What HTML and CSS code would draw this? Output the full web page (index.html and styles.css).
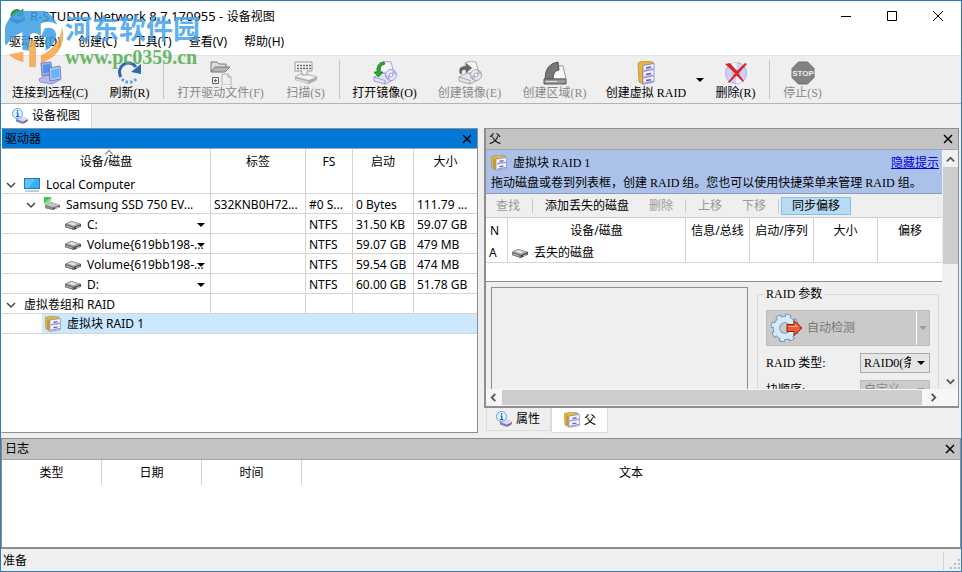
FILE: index.html
```html
<!DOCTYPE html>
<html lang="zh-CN">
<head>
<meta charset="utf-8">
<title>R-STUDIO Network 8.7.170955 - 设备视图</title>
<link rel="stylesheet" href="styles.css">
</head>
<body>
<svg class="defs" aria-hidden="true">
  <symbol id="i-disk" viewBox="0 0 16 16">
    <path d="M0 7 L6 4 L16 7 L16 9.500 L9 13 L0 10Z" fill="#444"/>
    <path d="M0 7 L6 4 L16 7 L9 10Z" fill="#a8a8a8"/>
    <path d="M3 6.600 L6.500 5 L12 6.800 L8.500 8.400Z" fill="#e2e2e2"/>
    <path d="M0 7 L9 10 V13 L0 10Z" fill="#777"/>
    <path d="M1 8.600 L7 10.600 V11.600 L1 9.600Z" fill="#b5b5b5"/>
    <path d="M11 10.500 L14.500 8.800 V9.800 L11 11.500Z" fill="#ccc"/>
  </symbol>
  <symbol id="i-ssd" viewBox="0 0 16 16">
    <path d="M1 8 L7 5 L16 8 L16 10 L9 13 L1 11Z" fill="#555"/>
    <path d="M1 8 L7 5 L16 8 L9 10.500Z" fill="#c4c4c4"/>
    <path d="M1 8 L9 10.500 V13 L1 11Z" fill="#888"/>
    <path d="M11 10.700 L14.500 9.300 V10.200 L11 11.700Z" fill="#ddd"/>
    <path d="M0 0 H8 L6 5 L1 8 L0 6Z" fill="#7fe093"/>
    <path d="M0 0 H7 L0 6Z" fill="#35c653"/>
  </symbol>
  <symbol id="i-pc" viewBox="0 0 16 16">
    <path d="M0 1 H16 V12 H0Z" fill="#2279b8"/>
    <path d="M1 2 H15 V11 H1Z" fill="#38b0f0"/>
    <path d="M1 2 H11 L5 11 H1Z" fill="#5cc4f8"/>
    <path d="M1 14 H15" stroke="#7fa2bd" stroke-width="1"/>
  </symbol>
  <symbol id="i-raid" viewBox="0 0 16 16">
    <path d="M0 1.500 L8 0 L14 1 L14 3 L5 4 V15 L1 13Z" fill="#e6b941" stroke="#9a7a2a" stroke-width=".5"/>
    <path d="M2 3 L4 3.500 V14 L2 13Z" fill="#c79a30"/>
    <path d="M5 4 L15.500 2.500 V13.500 L5 15.500Z" fill="#f4f4ff" stroke="#7a7ac0" stroke-width=".6"/>
    <path d="M6 8 L15 6.600 V8 L6 9.500Z M6 13.500 L15 11.800 V13 L6 15Z" fill="#9c9cdc"/>
    <path d="M8.500 6.300 L12.500 5.700 M8.500 11.700 L12.500 11" stroke="#5a5aa8" stroke-width="1.200"/>
  </symbol>
  <symbol id="i-info" viewBox="0 0 16 16">
    <path d="M4 11 L9 8 L16 11 L16 13 L11 16 L4 13.500Z" fill="#7f7fc0"/>
    <path d="M4 11 L9 8 L16 11 L11 13.600Z" fill="#dcdcf8"/>
    <path d="M12 14.300 L15 12.800" stroke="#c33" stroke-width="1"/>
    <circle cx="5.500" cy="5.500" r="5" fill="#e2f2ff" stroke="#5b9ad6" stroke-width=".9"/>
    <path d="M5.500 2 V3.500 M4.500 5 H5.800 V8.500 M4 8.500 H7.300" stroke="#1455c0" stroke-width="1.200" fill="none"/>
  </symbol>
  <symbol id="i-drive" viewBox="0 0 24 24">
    <path d="M1 16 L8 12 L23 16 V19 L15 23 L1 19Z" fill="currentColor" opacity=".75"/>
    <path d="M1 16 L8 12 L23 16 L15 19.500Z" fill="#f2f2f8" stroke="currentColor" stroke-width=".6"/>
    <path d="M2 17.500 L14 20.600 V22 L2 18.800Z" fill="#dedee8"/>
  </symbol>
  <symbol id="i-image" viewBox="0 0 24 24">
    <path d="M7 2 Q12 -1 18 1 L21 12 H8Z" fill="#f4f4fb" stroke="currentColor" stroke-width=".8"/>
    <path d="M1 16 L9 12 L20 15 V19 L12 23 L1 20Z" fill="#e4e4f0" stroke="currentColor" stroke-width=".8"/>
    <path d="M1 16 L12 19.500 V23" fill="none" stroke="currentColor" stroke-width=".8"/>
    <circle cx="18" cy="14" r="5.500" fill="#e8e8fa" stroke="currentColor" stroke-width=".8"/>
    <path d="M18 14 L20 8.800 A5.500 5.500 0 0 1 23.500 13Z M18 14 L16 19.200 A5.500 5.500 0 0 1 12.500 15Z" fill="currentColor" opacity=".5"/>
    <circle cx="18" cy="14" r="1.800" fill="#fff" stroke="currentColor" stroke-width=".8"/>
  </symbol>
</svg>

<div class="window">
  <header class="titlebar">
    <svg class="app-icon" viewBox="0 0 16 16"><path d="M1 9 L8 6 L16 9 V12 L9 16 L1 13Z" fill="#5555b0"/><path d="M1 9 L8 6 L16 9 L9 12Z" fill="#d0d0f4"/><path d="M2 8 A6 6 0 0 1 12 3 L14 1 V8 H8 L10 5.500 A3 3 0 0 0 5.500 8Z" fill="#2fa52f" stroke="#147014" stroke-width=".6"/></svg>
    <h1><span>R-STUDIO Network 8.7.170955 - </span>设备视图</h1>
    <div class="win-controls">
      <button type="button" aria-label="最小化"><svg viewBox="0 0 10 10"><path d="M0 5.500 H10" /></svg></button>
      <button type="button" aria-label="最大化"><svg viewBox="0 0 10 10"><path d="M.5 .5 H9.500 V9.500 H.5Z"/></svg></button>
      <button type="button" aria-label="关闭"><svg viewBox="0 0 10 10"><path d="M0 0 L10 10 M10 0 L0 10"/></svg></button>
    </div>
  </header>

  <nav class="menubar">
    <button type="button">驱动器(D)</button>
    <button type="button">创建(C)</button>
    <button type="button">工具(T)</button>
    <button type="button">查看(V)</button>
    <button type="button">帮助(H)</button>
  </nav>

  <div class="watermark" aria-hidden="true">
    <svg viewBox="0 0 62 60">
      <path d="M1 36 A28 28 0 0 1 54 14 Q46 9 37 13 V26 Q31 20 25 25 V41 L18 40 V22 Q7 26 1 36Z" fill="#3b9fe6"/>
      <path d="M41 18 Q51 15 53 24 Q52 36 42 41 V27 H37Z" fill="#3b9fe6"/>
      <path d="M4 45 L19 42 V53 Q10 51 4 45Z" fill="#f6a54a"/>
      <path d="M25 31 H32 V58 H25Z" fill="#f6a54a"/>
      <path d="M59 16 Q65 44 37 54 V46 Q57 36 59 16Z" fill="#f6a54a"/>
    </svg>
    <div><b>河东软件园</b><i>www.pc0359.cn</i></div>
  </div>

  <div class="toolbar" role="toolbar">
    <button type="button" class="w5"><svg viewBox="0 0 24 24"><path d="M1 18 L9 14 L22 19 L14 23 L2 21Z" fill="#b9b9ea" stroke="#7474bc" stroke-width=".7"/><path d="M3 2 L13 1 L14 13 L4 15Z" fill="#a3ade8" stroke="#5f6cba" stroke-width=".8"/><path d="M5 4 L12 3 L12.500 11 L5.500 12.500Z" fill="#4c92ee"/><path d="M11 7 L22 5 L23 18 L12 20Z" fill="#b8c4f2" stroke="#5f6cba" stroke-width=".8"/><path d="M13 9 L21 7.500 L21.500 16 L13.500 17.500Z" fill="#62b6f6"/></svg>连接到远程(C)</button>
    <button type="button" class="w2"><svg viewBox="0 0 24 24"><path d="M3 16 A9 9 0 0 1 18 6" fill="none" stroke="#2c67b5" stroke-width="3"/><path d="M23 3 V13 L13 11Z" fill="#2c67b5"/><path d="M4 18 A9 9 0 0 0 18 18" fill="none" stroke="#5ea2e8" stroke-width="3" stroke-dasharray="2.500 2"/></svg>刷新(R)</button>
    <span class="sep"></span>
    <button type="button" class="w6" disabled><svg viewBox="0 0 24 24"><path d="M2 11 V1 H8 L10 3 H17 V6" fill="#ddd" stroke="#777"/><path d="M2 11 L6 6 H21 L16 11Z" fill="#b5b5b5" stroke="#777"/><path d="M3.500 16.500 h6 v6 h-6z M5 19.500 h3 M6.500 18 v3" fill="none" stroke="#666"/><path d="M13 13 H19 L22 16 V24 H13Z" fill="#f0f0f0" stroke="#b4b4b4"/><path d="M19 13 V16 H22" fill="none" stroke="#aaa"/></svg>打开驱动文件(F)</button>
    <button type="button" class="w2" disabled><svg viewBox="0 0 24 24"><use href="#i-drive"/><path d="M1 1 H18 V10 H13 V14 H8 V10 H1Z" fill="#f5f5f5" stroke="#999"/><path d="M3 4.500 H17 M3 7.500 H17" stroke="#666" stroke-width="1.400" stroke-dasharray="2 1"/></svg>扫描(S)</button>
    <span class="sep"></span>
    <button type="button" class="w4 violet"><svg viewBox="0 0 24 24"><use href="#i-image"/><path d="M12 3 Q6 4 7 11 H10 L5.500 16 L1 11 H4 Q3 2 11 1Z" fill="#2cae2c" stroke="#137013" stroke-width=".8"/></svg>打开镜像(O)</button>
    <button type="button" class="w4" disabled><svg viewBox="0 0 24 24"><use href="#i-image"/><path d="M2 13 Q-1 5 8 5 V2 L14 7 L8 12 V9 Q3 8 4 13Z" fill="#666"/></svg>创建镜像(E)</button>
    <button type="button" class="w4" disabled><svg viewBox="0 0 24 24"><path d="M11 5 H20 L23 18 H8Z" fill="#fafafa" stroke="#999"/><path d="M2 18 Q2 3 15 1 L16 9 Q10 10 10 18Z" fill="#777" stroke="#555"/><path d="M1 18 H23 V23 H1Z" fill="#999" stroke="#555"/><path d="M3 20.500 H14" stroke="#ddd"/></svg>创建区域(R)</button>
    <button type="button" class="w6r"><svg viewBox="0 0 24 24"><path d="M4 2 L9 0 L19 1 V3 L9 4.500 V23 L5 21Z" fill="#e8b638" stroke="#9a7a2a" stroke-width=".6"/><path d="M9 4.500 L20 2.500 V21 L9 23.500Z" fill="#f1f1ff" stroke="#7a7ac0" stroke-width=".7"/><path d="M9.500 9 L19.500 7 V9 L9.500 11Z M9.500 15.500 L19.500 13.500 V15.500 L9.500 17.500Z M9.500 21.500 L19.500 19.500 V21 L9.500 23Z" fill="#9c9cdc"/><path d="M12 7 L17 6.100 M12 13.400 L17 12.500 M12 19.600 L17 18.700" stroke="#5a5aa8" stroke-width="1.500"/></svg>创建虚拟 RAID</button>
    <button type="button" class="drop" aria-label="更多"><span class="tri"></span></button>
    <button type="button" class="w2"><svg viewBox="0 0 24 24"><circle cx="12" cy="12" r="10.500" fill="#cfcffa" stroke="#9c9ce0" stroke-width=".8"/><path d="M12 12 L4 5 A11 11 0 0 1 13 1.500Z M12 12 L20 19 A11 11 0 0 1 12 22.500Z" fill="#f0f0ff"/><circle cx="12" cy="12" r="3" fill="#fff" stroke="#99c"/><path d="M1 3 L6 2 L13 10 L21 2 L23 3 L14.500 12.500 L20 20 L19 21 L12.500 14.500 L5 22 L4 21 L11 12.500Z" fill="#dc2424"/></svg>删除(R)</button>
    <span class="sep"></span>
    <button type="button" class="w2" disabled><svg viewBox="0 0 24 24"><path d="M7.500 1 H16.500 L23 7.500 V16.500 L16.500 23 H7.500 L1 16.500 V7.500Z" fill="#828282" stroke="#6c6c6c"/><text x="12" y="15" class="stop" text-anchor="middle">STOP</text></svg>停止(S)</button>
  </div>

  <div class="viewtabs"><button type="button"><svg><use href="#i-info"/></svg>设备视图</button></div>

  <main class="workspace">
    <section class="panel drives">
      <header class="cap active"><h2>驱动器</h2><button type="button" aria-label="关闭"><svg viewBox="0 0 8 8"><path d="M0 0 L8 8 M8 0 L0 8"/></svg></button></header>
      <table class="tree">
        <colgroup><col class="c-name"><col class="c-label"><col class="c-fs"><col class="c-start"><col></colgroup>
        <thead><tr><th class="sorted">设备/磁盘</th><th>标签</th><th>FS</th><th>启动</th><th>大小</th></tr></thead>
        <tbody>
          <tr><td><div class="node"><svg class="chev" viewBox="0 0 10 10"><path d="M1 3 L5 7 L9 3"/></svg><svg><use href="#i-pc"/></svg><span>Local Computer</span></div></td><td></td><td></td><td></td><td></td></tr>
          <tr><td><div class="node l1"><svg class="chev" viewBox="0 0 10 10"><path d="M1 3 L5 7 L9 3"/></svg><svg><use href="#i-ssd"/></svg><span>Samsung SSD 750 EV...</span></div></td><td>S32KNB0H72...</td><td>#0 S...</td><td>0 Bytes</td><td>111.79 ...</td></tr>
          <tr><td><div class="node l2"><svg><use href="#i-disk"/></svg><span>C:</span><b class="tri"></b></div></td><td></td><td>NTFS</td><td>31.50 KB</td><td>59.07 GB</td></tr>
          <tr><td><div class="node l2"><svg><use href="#i-disk"/></svg><span>Volume{619bb198-...</span><b class="tri"></b></div></td><td></td><td>NTFS</td><td>59.07 GB</td><td>479 MB</td></tr>
          <tr><td><div class="node l2"><svg><use href="#i-disk"/></svg><span>Volume{619bb198-...</span><b class="tri"></b></div></td><td></td><td>NTFS</td><td>59.54 GB</td><td>474 MB</td></tr>
          <tr><td><div class="node l2"><svg><use href="#i-disk"/></svg><span>D:</span><b class="tri"></b></div></td><td></td><td>NTFS</td><td>60.00 GB</td><td>51.78 GB</td></tr>
          <tr><td><div class="node"><svg class="chev" viewBox="0 0 10 10"><path d="M1 3 L5 7 L9 3"/></svg><span>虚拟卷组和 RAID</span></div></td><td></td><td></td><td></td><td></td></tr>
          <tr class="selected"><td colspan="5"><div class="node picked"><svg><use href="#i-raid"/></svg><span>虚拟块 RAID 1</span></div></td></tr>
        </tbody>
      </table>
    </section>

    <div class="side">
      <section class="panel parent">
        <header class="cap"><h2>父</h2><button type="button" aria-label="关闭"><svg viewBox="0 0 8 8"><path d="M0 0 L8 8 M8 0 L0 8"/></svg></button></header>
        <div class="scroller">
          <div class="view">
            <div class="hint">
              <div class="hint-top"><svg><use href="#i-raid"/></svg><strong>虚拟块 RAID 1</strong><a href="#">隐藏提示</a></div>
              <p>拖动磁盘或卷到列表框，创建 RAID 组。您也可以使用快捷菜单来管理 RAID 组。</p>
            </div>
            <div class="minibar" role="toolbar">
              <button type="button" disabled>查找</button><span class="sep"></span>
              <button type="button">添加丢失的磁盘</button>
              <button type="button" disabled>删除</button><span class="sep"></span>
              <button type="button" disabled>上移</button>
              <button type="button" disabled>下移</button><span class="sep"></span>
              <button type="button" class="on" aria-pressed="true">同步偏移</button>
            </div>
            <div class="members">
              <table>
                <colgroup><col class="m-n"><col><col class="m-x"><col class="m-x"><col class="m-x"><col class="m-x"></colgroup>
                <thead><tr><th class="left">N</th><th>设备/磁盘</th><th>信息/总线</th><th>启动/序列</th><th>大小</th><th>偏移</th></tr></thead>
                <tbody><tr><td>A</td><td><div class="node"><svg><use href="#i-disk"/></svg><span>丢失的磁盘</span></div></td><td></td><td></td><td></td><td></td></tr></tbody>
              </table>
            </div>
            <div class="params">
              <div class="canvas"></div>
              <fieldset>
                <legend>RAID 参数</legend>
                <div class="detect">
                  <button type="button" disabled><svg viewBox="0 0 32 32"><g fill="none"><circle cx="14" cy="16" r="12" stroke="#6289b5" stroke-width="4.500" stroke-dasharray="5.500 3.925"/><circle cx="14" cy="16" r="8.500" stroke="#6289b5" stroke-width="7"/><circle cx="14" cy="16" r="8.500" stroke="#d5eafa" stroke-width="5.400"/><circle cx="14" cy="16" r="12" stroke="#d5eafa" stroke-width="3" stroke-dasharray="4.100 5.325" stroke-dashoffset="-.7"/></g><path d="M16 12.500 H23 V8.500 L31 16 L23 23.500 V19.500 H16Z" fill="#f25a35" stroke="#8d1c0c"/><path d="M17.500 14 H24 V12 L27 15 H17.500Z" fill="#ffac88"/></svg>自动检测</button>
                  <button type="button" disabled aria-label="检测选项" class="more"><span class="tri"></span></button>
                </div>
                <div class="field"><label for="rtype">RAID 类型:</label><div class="pick"><select id="rtype"><option>RAID0(条带)</option></select><span class="tri"></span></div></div>
                <div class="field"><label for="order">块顺序:</label><div class="pick"><select id="order" disabled><option>自定义</option></select><span class="tri"></span></div></div>
              </fieldset>
            </div>
          </div>
          <div class="vbar"><svg viewBox="0 0 10 10"><path d="M1 7 L5 3 L9 7"/></svg><span></span><svg viewBox="0 0 10 10"><path d="M1 3 L5 7 L9 3"/></svg></div>
          <div class="hbar"><svg viewBox="0 0 10 10"><path d="M7 1 L3 5 L7 9"/></svg><span></span><svg viewBox="0 0 10 10"><path d="M3 1 L7 5 L3 9"/></svg></div>
        </div>
      </section>
      <div class="dock-tabs">
        <button type="button"><svg><use href="#i-info"/></svg>属性</button>
        <button type="button" class="current"><svg><use href="#i-raid"/></svg>父</button>
      </div>
    </div>
  </main>

  <section class="panel log">
    <header class="cap"><h2>日志</h2><button type="button" aria-label="关闭"><svg viewBox="0 0 8 8"><path d="M0 0 L8 8 M8 0 L0 8"/></svg></button></header>
    <table>
      <colgroup><col class="g"><col class="g"><col class="g"><col></colgroup>
      <thead><tr><th>类型</th><th>日期</th><th>时间</th><th>文本</th></tr></thead>
    </table>
  </section>

  <footer class="status"><span>准备</span><div class="grip"><svg viewBox="0 0 12 12"><path d="M9 1h2v2h-2z M9 5h2v2h-2z M9 9h2v2h-2z M5 5h2v2h-2z M5 9h2v2h-2z M1 9h2v2h-2z" fill="#bbb"/></svg></div></footer>
</div>
</body>
</html>
```
FILE: styles.css
```css
* { box-sizing: border-box; }

:root {
  --ui: "Noto Sans", "Noto Sans CJK SC", sans-serif;
  --song: "Liberation Serif", "Noto Sans CJK SC", serif;
  --line: #d4d4d4;
  --edge: #8e8e8e;
  --face: #efefef;
}

body { margin: 0; font: 12px/16px var(--ui); color: #000; }
button, select { font: inherit; color: inherit; border: 0; background: none; padding: 0; margin: 0; }
h1, h2, p { margin: 0; font: inherit; }
svg { display: block; flex: none; width: 16px; height: 16px; }
.defs { position: absolute; width: 0; height: 0; }

.window {
  position: relative;
  display: flex;
  flex-direction: column;
  height: 100vh;
  border: 1px solid #2f7dbb;
  background: var(--face);
}

.tri {
  flex: none;
  width: 0;
  height: 0;
  border: 4px solid transparent;
  border-top-color: #000;
  border-bottom: 0;
}

/* Title and menu */
.titlebar { display: flex; align-items: center; height: 30px; padding-left: 8px; background: #fff; }
.titlebar h1 { flex: 1; padding-left: 5px; }
.titlebar h1 span { font-size: 13px; }
.win-controls { display: flex; }
.win-controls button { display: grid; place-items: center; width: 46px; height: 28px; }
.win-controls svg { width: 10px; height: 10px; overflow: visible; fill: none; stroke: #000; }

.menubar { display: flex; gap: 1px; height: 24px; padding-bottom: 2px; background: #fff; }
.menubar button { padding: 0 8px; }

.watermark {
  position: absolute;
  left: 4px;
  top: 10px;
  display: flex;
  opacity: .85;
  pointer-events: none;
}
.watermark svg { width: 60px; height: 58px; }
.watermark div { display: flex; flex-direction: column; }
.watermark b { font: 700 27px/34px "Noto Sans CJK SC", sans-serif; color: #45a3ee; }
.watermark i { font: 700 20px/24px "Liberation Serif", serif; color: #4fae4f; }

/* Main toolbar */
.toolbar {
  display: flex;
  height: 49px;
  border-top: 1px solid #e4e4e4;
  border-bottom: 1px solid #b4b4b4;
  font-family: var(--song);
}
.toolbar button { display: flex; flex-direction: column; align-items: center; padding-top: 5px; white-space: nowrap; }
.toolbar svg { width: 24px; height: 24px; color: #999; }
.toolbar .violet svg { color: #8c8ce0; }
.toolbar button:disabled { color: #888; }
.toolbar .w2 { width: 61px; }
.toolbar .w4 { width: 85px; }
.toolbar .w5 { width: 98px; }
.toolbar .w6 { width: 109px; }
.toolbar .w6r { width: 98px; }
.toolbar .drop { justify-content: center; width: 10px; padding: 0; }
.toolbar .sep { width: 1px; margin: 4px 2px 4px 3px; background: #c6c6c6; }
.stop { font: 700 8px "Liberation Sans", sans-serif; fill: #eee; }

.viewtabs { display: flex; height: 24px; }
.viewtabs button { display: flex; align-items: center; gap: 4px; padding: 0 11px; background: #fff; border-right: 1px solid #d9d9d9; }

/* Docked panels */
.workspace { display: flex; flex: 1; min-height: 0; gap: 6px; padding-right: 2px; }
.panel { border: 1px solid var(--edge); background: #fff; min-width: 0; }
.drives { flex: 1; border-left-color: #fff; }
.side { display: flex; flex-direction: column; flex: 1; min-width: 0; }
.cap { display: flex; align-items: center; height: 20px; padding-left: 3px; background: #c3c3c3; border-bottom: 1px solid #a6a6a6; }
.cap.active { background: #0078d7; }
.cap h2 { flex: 1; }
.cap button { display: grid; place-items: center; width: 20px; height: 19px; }
.cap svg { width: 8px; height: 8px; overflow: visible; fill: none; stroke: #000; stroke-width: 1.500; }

table { width: 100%; table-layout: fixed; border-collapse: separate; border-spacing: 0; }
th, td { height: 20px; padding: 0 0 0 3px; border-right: 1px solid var(--line); font-weight: 400; text-align: left; white-space: nowrap; overflow: hidden; }
td { border-bottom: 1px solid var(--line); }
th { height: 25px; padding: 0; text-align: center; }
th:last-child, td:last-child { border-right: 0; }

.node { display: flex; align-items: center; gap: 6px; height: 19px; padding-left: 1px; }
.chev { width: 10px; height: 10px; margin-right: 2px; fill: none; stroke: #444; stroke-width: 1.500; }
.l1 { padding-left: 21px; }
.l2 { padding-left: 60px; position: relative; }
.l2 .tri { position: absolute; right: 5px; }
.c-name { width: 209px; }
.c-label { width: 95px; }
.c-fs { width: 47px; }
.c-start { width: 61px; }
.tree td { padding-top: 2px; }
.tree .node { height: 17px; }
.tree .sorted { position: relative; }
.tree .sorted::before {
  content: "";
  position: absolute;
  left: 50%;
  top: 2px;
  width: 5px;
  height: 5px;
  border: solid #777;
  border-width: 1px 0 0 1px;
  transform: rotate(45deg);
}
.tree .selected td { padding: 0 0 0 40px; }
.tree .picked { height: 19px; padding: 1px 0 0 3px; background: #cce8ff; }

.parent { display: flex; flex-direction: column; flex: 1; min-height: 0; border-bottom-width: 2px; border-left-width: 2px; }
.parent .cap { height: 21px; }
.scroller { display: grid; grid-template: minmax(0, 1fr) 17px / minmax(0, 1fr) 16px; flex: 1; min-height: 0; background: var(--face); }
.view { overflow: hidden; font-family: var(--song); }

.hint { height: 44px; padding: 3px 3px 3px 5px; background: #abc1ea; border-bottom: 1px solid #8c9cbc; }
.hint-top { display: flex; align-items: center; gap: 6px; height: 20px; }
.hint-top strong { flex: 1; font-weight: 400; }
.hint a { color: #0000e0; }
.hint p { height: 20px; line-height: 20px; white-space: nowrap; }

.minibar { display: flex; align-items: center; height: 23px; }
.minibar button { height: 18px; padding: 0 10px; white-space: nowrap; }
.minibar button:disabled { color: #999; }
.minibar .sep { width: 1px; height: 14px; margin: 0 2px; background: #c8c8c8; }
.minibar .on { background: #b9daf3; border: 1px solid #86bfe8; }

.members { height: 65px; border: solid; border-color: #ccc transparent var(--edge); border-width: 1px 0; background: #fff; font-family: var(--ui); }
.m-n { width: 22px; }
.m-x { width: 64px; }
.members th.left { text-align: left; padding-left: 4px; }

.params { display: flex; gap: 9px; padding: 5px 3px 0 5px; }
.canvas { flex: 1; height: 200px; border: 1px solid var(--edge); }
fieldset { flex: none; width: 182px; height: 200px; min-width: 0; margin: 0; padding: 9px 8px 0; border: 1px solid #d8d8d8; }
legend { padding: 0 2px; margin-left: -2px; height: 14px; line-height: 14px; }
.detect { display: flex; height: 36px; background: #cacaca; border: 1px solid #bdbdbd; color: #777; }
.detect button { display: flex; align-items: center; gap: 4px; padding-left: 4px; flex: 1; }
.detect svg { width: 32px; height: 32px; }
.detect .more { flex: none; width: 13px; padding: 0; justify-content: center; border-left: 1px solid #fff; }
.detect .tri { border-top-color: #999; }
.field { display: flex; align-items: center; justify-content: space-between; margin-top: 7px; height: 20px; }
.pick { position: relative; width: 70px; height: 20px; }
.pick select { width: 100%; height: 100%; appearance: none; padding: 0 18px 0 3px; border: 1px solid #aaa; background: #e5e5e5; border-radius: 0; overflow: hidden; }
.pick select:disabled { color: #888; background: #ccc; border-color: #bbb; opacity: 1; }
.pick .tri { position: absolute; right: 5px; top: 8px; }
.pick select:disabled + .tri { border-top-color: #999; }

.vbar, .hbar { display: flex; align-items: center; }
.vbar { flex-direction: column; background: #f0f0f0; padding: 5px 0 3px; }
.hbar { grid-column: 1 / 3; background: #f6f6f6; padding: 0 20px 0 3px; gap: 4px; }
.hbar svg:last-child { margin-left: 3px; }
.vbar svg, .hbar svg { width: 9px; height: 9px; fill: none; stroke: #555; stroke-width: 2; }
.vbar span { width: 15px; height: 97px; margin: 3px 0 auto; background: #cdcdcd; }
.hbar span { flex: 1; height: 15px; background: #cdcdcd; }

.dock-tabs { display: flex; height: 25px; padding-left: 2px; align-items: flex-start; }
.dock-tabs button { display: flex; align-items: center; gap: 4px; height: 23px; padding: 0 10px 0 9px; border: 1px solid #dcdcdc; border-top: 0; }
.dock-tabs .current { height: 25px; padding: 0 11px 0 12px; background: #fff; }

.log { height: 111px; margin-top: 5px; border-bottom-width: 2px; }
.log .cap { height: 21px; }
.g { width: 100px; }

.status { display: flex; align-items: center; justify-content: space-between; height: 22px; padding: 1px 0 0 2px; }
.grip { display: flex; align-items: flex-end; justify-content: flex-end; width: 18px; height: 18px; border-left: 1px solid #d4d4d4; }
.grip svg { width: 12px; height: 12px; }
```
